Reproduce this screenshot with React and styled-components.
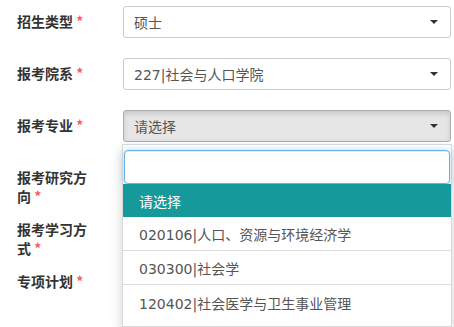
import React from 'react'
import styled, { createGlobalStyle } from 'styled-components'

const GlobalStyle = createGlobalStyle`
  body {
    margin: 0;
    min-height: 100vh;
    background: #fff;
    font-family: "DejaVu Sans", "Noto Sans CJK SC", sans-serif;
  }
`

const rows = [
  { label: '招生类型', value: '硕士' },
  { label: '报考院系', value: '227|社会与人口学院' },
  { label: '报考专业', value: '请选择', open: true },
  { label: '报考研究方向', value: '' },
  { label: '报考学习方式', value: '' },
  { label: '专项计划', value: '' },
]

const options = [
  '020106|人口、资源与环境经济学',
  '030300|社会学',
  '120402|社会医学与卫生事业管理',
]

function App() {
  return (
    <>
      <GlobalStyle />
      <Form>
        {rows.map((row) => (
          <Row key={row.label}>
            <Label>
              {row.label} <Star>*</Star>
            </Label>
            <Control>
              <Select $active={row.open}>
                <span>{row.value}</span>
                <Caret />
              </Select>
              {row.open && (
                <Dropdown>
                  <SearchWrap>
                    <Search type="text" />
                  </SearchWrap>
                  <List>
                    <Option $selected>请选择</Option>
                    {options.map((o) => (
                      <Option key={o}>{o}</Option>
                    ))}
                  </List>
                </Dropdown>
              )}
            </Control>
          </Row>
        ))}
      </Form>
    </>
  )
}

export default App

const Form = styled.div`
  display: flex;
  flex-direction: column;
  gap: 20px;
  min-height: 327px;
  box-sizing: border-box;
  padding: 6px 3px 0 17px;
`

const Row = styled.div`
  display: grid;
  grid-template-columns: 76px 1fr;
  column-gap: 30px;
  align-items: start;
  height: 32px;
`

const Label = styled.div`
  padding-top: 6px;
  font-family: "Noto Sans CJK SC", sans-serif;
  font-weight: bold;
  font-size: 14px;
  line-height: 19px;
  color: #333;
`

const Star = styled.span`
  color: #ff5a5a;
`

const Control = styled.div`
  position: relative;
`

const Select = styled.div`
  box-sizing: border-box;
  height: 32px;
  display: flex;
  align-items: center;
  justify-content: space-between;
  padding: 0 12px 0 10px;
  border: 1px solid ${(p) => (p.$active ? '#adadad' : '#ccc')};
  border-radius: 3px;
  background: ${(p) => (p.$active ? '#e6e6e6' : '#fff')};
  box-shadow: ${(p) => (p.$active ? 'inset 0 3px 5px rgba(0,0,0,.125)' : 'none')};
  font-size: 14px;
  color: #555;
`

const Caret = styled.i`
  width: 0;
  height: 0;
  border-top: 4px solid #333;
  border-left: 4px solid transparent;
  border-right: 4px solid transparent;
`

const Dropdown = styled.div`
  position: absolute;
  z-index: 10;
  top: 34px;
  left: -1px;
  right: -1px;
  background: #fff;
  border: 1px solid rgba(0, 0, 0, 0.15);
  box-shadow: 0 6px 12px rgba(0, 0, 0, 0.175);
`

const SearchWrap = styled.div`
  padding: 5px 1px 0;
`

const Search = styled.input`
  box-sizing: border-box;
  display: block;
  width: 100%;
  height: 34px;
  border: 1px solid #66afe9;
  border-radius: 4px;
  outline: none;
  box-shadow: inset 0 1px 1px rgba(0, 0, 0, 0.075), 0 0 6px rgba(102, 175, 233, 0.5);
`

const List = styled.div`
  padding-bottom: 5px;
`

const Option = styled.div`
  box-sizing: border-box;
  height: ${(p) => (p.$selected ? '33px' : '34px')};
  display: flex;
  align-items: center;
  padding-left: 16px;
  font-size: 14px;
  color: ${(p) => (p.$selected ? '#fff' : '#555')};
  background: ${(p) => (p.$selected ? '#15999a' : '#fff')};
  border-bottom: ${(p) => (p.$selected ? 'none' : '1px solid #ddd')};

  &:last-child {
    border-bottom: none;
    height: 36px;
  }
`
